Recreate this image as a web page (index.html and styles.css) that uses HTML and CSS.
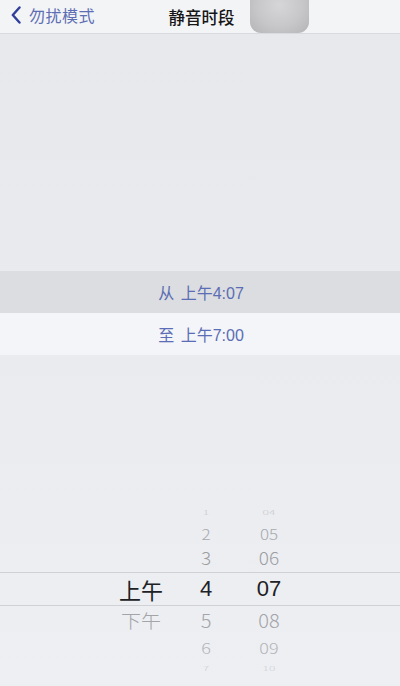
FILE: index.html
```html
<!DOCTYPE html>
<html lang="zh">
<head>
<meta charset="utf-8">
<title>静音时段</title>
<link rel="stylesheet" href="styles.css">
</head>
<body>
<div class="screen">
  <header class="nav">
    <div class="back">
      <svg class="chev" viewBox="0 0 10 18" width="10" height="18"><path d="M8.5 1.5 L1.8 9 L8.5 16.5" fill="none" stroke="#2f3f9a" stroke-width="2.4" stroke-linecap="round" stroke-linejoin="round"/></svg>
      <span class="back-label">勿扰模式</span>
    </div>
    <div class="title">静音时段</div>
    <div class="blur-box"></div>
  </header>
  <div class="gap-top"></div>
  <div class="range">
    <div class="range-row from">从 上午4:07</div>
    <div class="range-row to">至 上午7:00</div>
  </div>
  <div class="gap-mid"></div>
  <div class="picker">
    <div class="prow r1"><span></span><span>1</span><span>04</span></div>
    <div class="prow r2"><span></span><span>2</span><span>05</span></div>
    <div class="prow r3"><span></span><span>3</span><span>06</span></div>
    <div class="prow sel"><span>上午</span><span>4</span><span>07</span></div>
    <div class="prow r5"><span>下午</span><span>5</span><span>08</span></div>
    <div class="prow r6"><span></span><span>6</span><span>09</span></div>
    <div class="prow r7"><span></span><span>7</span><span>10</span></div>
  </div>
</div>
</body>
</html>
```

FILE: styles.css
```css
* { box-sizing: border-box; }
html, body { margin: 0; padding: 0; }
body {
  width: 400px;
  height: 686px;
  overflow: hidden;
  font-family: "Noto Sans CJK SC", "Noto Sans", "Liberation Sans", sans-serif;
  background: #e8e9ee;
}
.screen {
  display: flex;
  flex-direction: column;
  height: 686px;
  background: linear-gradient(180deg, #e7e8ec 0%, #e9ebef 50%, #edeff3 100%);
}
.nav {
  position: relative;
  height: 34px;
  flex: none;
  background: #f3f4f6;
  border-bottom: 1px solid #d9dadd;
  display: flex;
  align-items: center;
  padding-left: 11px;
}
.back {
  display: flex;
  align-items: center;
  gap: 8px;
  margin-top: -3px;
}
.chev { display: block; }
.back-label {
  font-size: 16px;
  color: #5e6eb4;
  letter-spacing: 0.5px;
}
.title {
  position: absolute;
  left: 0;
  right: 0;
  top: 5px;
  text-align: center;
  font-size: 16.5px;
  font-weight: 500;
  color: #161616;
  padding-left: 3px;
}
.blur-box {
  position: absolute;
  left: 250px;
  top: -10px;
  width: 59px;
  height: 43px;
  border-radius: 11px;
  background: radial-gradient(ellipse at 50% 35%, #d6d6d8 0%, #c7c7c9 55%, #b4b4b6 100%);
}
.gap-top { height: 237px; flex: none; }
.range { flex: none; }
.range-row {
  height: 42px;
  display: flex;
  align-items: center;
  justify-content: center;
  font-family: "Liberation Sans", "Noto Sans CJK SC", sans-serif;
  font-size: 16px;
  color: #5b6db4;
  padding-left: 2px;
  word-spacing: 2px;
}
.range-row.from { background: #dcdde0; }
.range-row.to { background: #f3f5f9; }
.gap-mid { height: 146px; flex: none; }
.picker {
  display: flex;
  flex-direction: column;
  flex: none;
}
.prow {
  display: grid;
  grid-template-columns: 111px 60px 70px 56px;
  align-items: center;
  font-weight: 300;
}
.prow span { text-align: center; }
.prow span:first-child { grid-column: 2; }
.r1 { height: 20px; font-size: 12px; color: #c9cacd; }
.r1 span { transform: scaleY(0.55); }
.r2 { height: 21px; font-size: 17px; color: #a9aaae; }
.r2 span { transform: scaleY(0.85); }
.r3 { height: 30px; font-size: 19px; color: #9c9da1; }
.r3 span { transform: scaleY(0.93); }
.sel {
  height: 34px;
  font-size: 22px;
  color: #202124;
  font-weight: 400;
  border-top: 1px solid #cfd1d5;
  border-bottom: 1px solid #cfd1d5;
}
.sel span:nth-child(n+2) { font-family: "Liberation Sans", sans-serif; }
.r5 { height: 28px; font-size: 20px; color: #a3a4a8; }
.r5 span { transform: scaleY(0.93); }
.r6 { height: 23px; font-size: 18px; color: #b3b4b8; }
.r6 span { transform: scaleY(0.82); }
.r7 { height: 20px; font-size: 12px; color: #d0d1d4; }
.r7 span { transform: scaleY(0.55); }
```
